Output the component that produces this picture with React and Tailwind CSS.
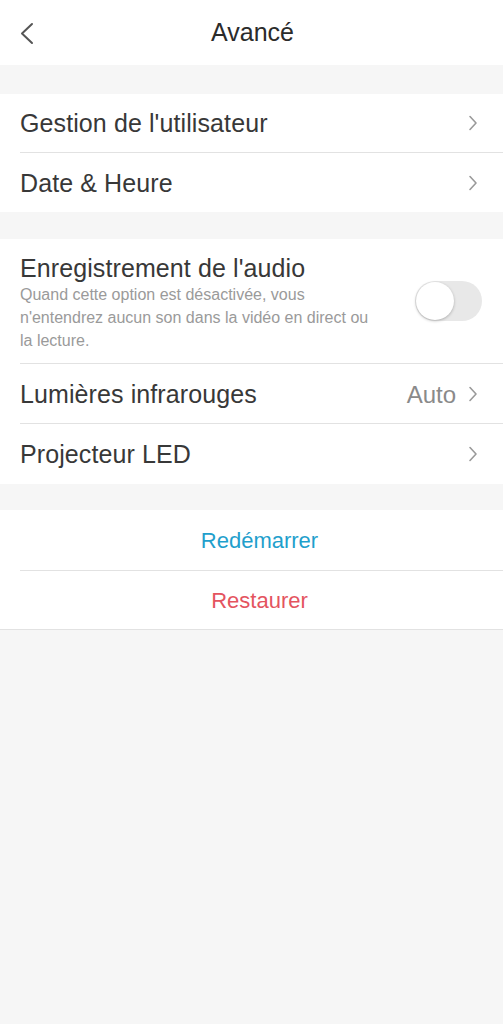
import React from "react";

const font = { fontFamily: '"Liberation Sans", Arial, sans-serif' };

function Chevron() {
  return (
    <svg width="10" height="16" viewBox="0 0 10 16" className="shrink-0">
      <path d="M2 1.5 L8 8 L2 14.5" fill="none" stroke="#9a9a9a" strokeWidth="1.6" strokeLinecap="round" strokeLinejoin="round" />
    </svg>
  );
}

function Row({ label, value, last, h = "h-[59px]" }) {
  return (
    <div className="pl-5">
      <div className={`flex items-center ${h} pr-[25px] ${last ? "" : "border-b border-[#e2e2e2]"}`}>
        <span className="flex-1 text-[25px] text-[#383838] tracking-[0.1px] pt-[2px]">{label}</span>
        {value && <span className="text-[24px] text-[#8a8a8a] mr-3 pt-[2px]">{value}</span>}
        <Chevron />
      </div>
    </div>
  );
}

export default function App() {
  return (
    <div className="min-h-[1024px] bg-[#f6f6f6]" style={font}>
      <div className="h-[65px] bg-white flex items-center relative">
        <div className="absolute left-[19px] top-[22px]">
          <svg width="16" height="23" viewBox="0 0 16 23">
            <path d="M13 2 L3 11.5 L13 21" fill="none" stroke="#555" strokeWidth="2" strokeLinecap="round" strokeLinejoin="round" />
          </svg>
        </div>
        <div className="flex-1 text-center text-[25px] text-[#2b2b2b] pl-[2px]">Avancé</div>
      </div>

      <div className="h-[29px]" />

      <div className="bg-white">
        <Row label="Gestion de l'utilisateur" />
        <Row label="Date & Heure" last />
      </div>

      <div className="h-[27px]" />

      <div className="bg-white">
        <div className="pl-5">
          <div className="flex items-center h-[125px] pr-[21px] border-b border-[#e2e2e2]">
            <div className="flex-1 pt-[2px]">
              <div className="text-[25px] text-[#383838] leading-[30px] tracking-[0.1px]">Enregistrement de l'audio</div>
              <div className="text-[16px] text-[#9a9a9a] leading-[23px]">
                Quand cette option est désactivée, vous
                <br />
                n'entendrez aucun son dans la vidéo en direct ou
                <br />
                la lecture.
              </div>
            </div>
            <div className="relative w-[67px] h-[40px] rounded-full bg-[#e8e8e8] shrink-0">
              <div className="absolute left-[1px] top-[1px] w-[38px] h-[38px] rounded-full bg-white shadow-[0_1px_3px_rgba(0,0,0,0.25)]" />
            </div>
          </div>
        </div>
        <Row label="Lumières infrarouges" value="Auto" h="h-[60px]" />
        <Row label="Projecteur LED" last h="h-[60px]" />
      </div>

      <div className="h-[26px]" />

      <div className="bg-white border-b border-[#e2e2e2]">
        <div className="pl-5">
          <div className="h-[61px] flex items-center justify-center border-b border-[#e2e2e2] text-[22px] text-[#1f9fcc] pr-[4px]">
            Redémarrer
          </div>
        </div>
        <div className="h-[58px] flex items-center justify-center text-[22px] text-[#e4545f] pl-4">Restaurer</div>
      </div>
    </div>
  );
}
